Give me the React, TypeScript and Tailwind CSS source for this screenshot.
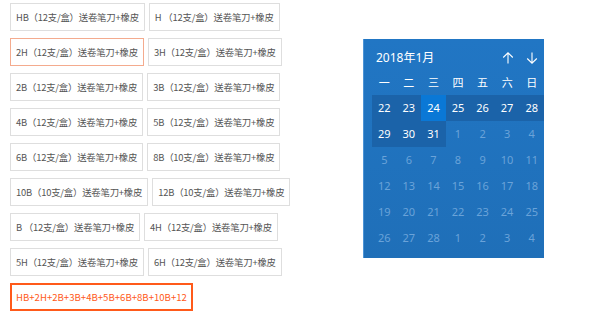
import React from 'react';

const rows: string[][] = [
  ['HB（12支/盒）送卷笔刀+橡皮', 'H （12支/盒）送卷笔刀+橡皮'],
  ['2H（12支/盒）送卷笔刀+橡皮', '3H（12支/盒）送卷笔刀+橡皮'],
  ['2B（12支/盒）送卷笔刀+橡皮', '3B（12支/盒）送卷笔刀+橡皮'],
  ['4B（12支/盒）送卷笔刀+橡皮', '5B（12支/盒）送卷笔刀+橡皮'],
  ['6B（12支/盒）送卷笔刀+橡皮', '8B（10支/盒）送卷笔刀+橡皮'],
  ['10B（10支/盒）送卷笔刀+橡皮', '12B（10支/盒）送卷笔刀+橡皮'],
  ['B （12支/盒）送卷笔刀+橡皮', '4H（12支/盒）送卷笔刀+橡皮'],
  ['5H（12支/盒）送卷笔刀+橡皮', '6H（12支/盒）送卷笔刀+橡皮'],
];

const weekdays = ['一', '二', '三', '四', '五', '六', '日'];

// days shown in the month grid; first 10 belong to the current view
const days = [
  22, 23, 24, 25, 26, 27, 28,
  29, 30, 31, 1, 2, 3, 4,
  5, 6, 7, 8, 9, 10, 11,
  12, 13, 14, 15, 16, 17, 18,
  19, 20, 21, 22, 23, 24, 25,
  26, 27, 28, 1, 2, 3, 4,
];

function Option({ label }: { label: string }) {
  const selected = label.startsWith('2H');
  return (
    <div
      className={`flex h-[28px] items-center whitespace-nowrap border px-[5px] text-[9.4px] tracking-[-0.2px] text-[#555] ${
        selected ? 'border-[#f4ab8e]' : 'border-[#dedede]'
      }`}
    >
      {label}
    </div>
  );
}

function Calendar() {
  return (
    <div className="mt-[36px] h-[219px] w-[181px] border-l border-[#4d94d6] bg-gradient-to-b from-[#2176c4] to-[#1f6fb8] text-white [font-family:'Noto_Sans','Noto_Sans_CJK_SC',sans-serif]">
      <div className="flex h-[38px] items-center pl-[12px] pr-[6px]">
        <span className="flex-1 text-[12px]">2018年1月</span>
        <div className="flex gap-[12px]">
          <svg width="12" height="12" viewBox="0 0 12 12" fill="none" stroke="white" strokeWidth="1.1">
            <path d="M6 11.5V0.8M1.2 5.5L6 0.8L10.8 5.5" />
          </svg>
          <svg width="12" height="12" viewBox="0 0 12 12" fill="none" stroke="white" strokeWidth="1.1">
            <path d="M6 0.5V11.2M1.2 6.5L6 11.2L10.8 6.5" />
          </svg>
        </div>
      </div>
      <div className="ml-[8px] grid w-[172px] grid-cols-7">
        {weekdays.map((w) => (
          <div key={w} className="flex h-[12px] items-center justify-center text-[11px]">
            {w}
          </div>
        ))}
      </div>
      <div className="ml-[8px] mt-[6px] grid w-[172px] grid-cols-7">
        {days.map((d, i) => {
          const active = i < 10;
          const today = i === 2;
          return (
            <div
              key={i}
              className={`flex h-[26px] items-center justify-center text-[11px] ${
                today ? 'bg-[#0a78d6]' : active ? 'bg-[#1b63a9]' : ''
              } ${active ? 'text-white' : 'text-[#6aa3d9]'}`}
            >
              {d}
            </div>
          );
        })}
      </div>
    </div>
  );
}

export default function App() {
  return (
    <div className="flex h-[325px] w-[600px] bg-white pl-[10px] pt-[3px] [font-family:'Noto_Sans_CJK_SC',sans-serif]">
      <div className="flex w-[353px] flex-col gap-[7px]">
        {rows.map((r, i) => (
          <div key={i} className="flex gap-[4px]">
            {r.map((l) => (
              <Option key={l} label={l} />
            ))}
          </div>
        ))}
        <div className="flex">
          <div className="flex h-[28px] items-center border-2 border-[#ff5a1a] px-[4px] text-[9.6px] text-[#ff5a1a]">
            HB+2H+2B+3B+4B+5B+6B+8B+10B+12
          </div>
        </div>
      </div>
      <Calendar />
    </div>
  );
}
